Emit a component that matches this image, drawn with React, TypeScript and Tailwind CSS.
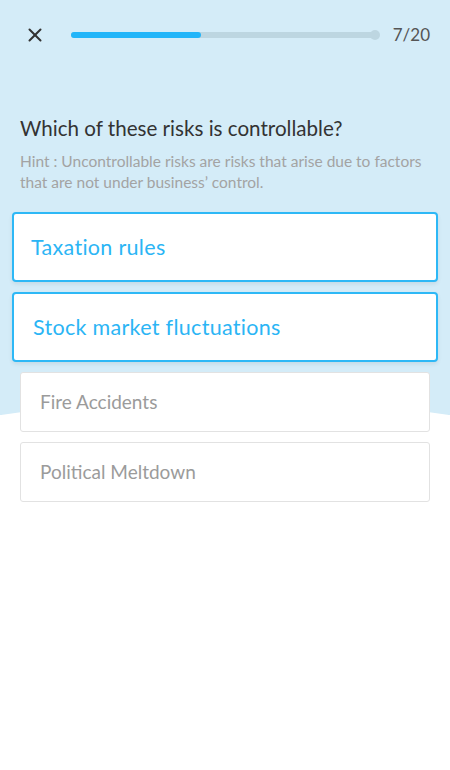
import { X } from "lucide-react";

const selected = ["Taxation rules", "Stock market fluctuations"];
const others = ["Fire Accidents", "Political Meltdown"];

export default function App() {
  return (
    <div
      className="relative w-[450px] h-[770px] overflow-hidden bg-white"
      style={{ fontFamily: "Lato, 'Noto Sans', sans-serif" }}
    >
      {/* light blue header area with curved bottom */}
      <div className="absolute inset-x-0 top-0 h-[460px] bg-[#d4ecf8]" />
      <div className="absolute left-[-175px] top-[400px] w-[800px] h-[174px] rounded-[50%] bg-white" />
      <div className="absolute inset-x-0 top-[487px] bottom-0 bg-white" />

      <div className="relative">
        {/* Top bar */}
        <div className="flex items-center h-[34px] mt-[18px] pl-[24px] pr-[20px]">
          <X className="w-[22px] h-[22px] text-[#333]" strokeWidth={2.2} />
          <div className="relative ml-[25px] w-[308px] h-[6px] rounded-full bg-[#bdd6e1]">
            <div className="h-full w-[130px] rounded-full bg-[#22b5f9]" />
            <div className="absolute right-[-1px] top-1/2 -translate-y-1/2 w-[10px] h-[10px] rounded-full bg-[#bdd6e1]" />
          </div>
          <span className="ml-auto text-[17px] text-[#555]">7/20</span>
        </div>

        {/* Question */}
        <div className="px-[20px] mt-[63px]">
          <h1 className="text-[20.6px] leading-[26px] text-[#333]">Which of these risks is controllable?</h1>
          <p className="mt-[10px] max-w-[405px] text-[15.5px] leading-[21px] text-[#a3a3a3]">
            Hint : Uncontrollable risks are risks that arise due to factors that are not under business’ control.
          </p>
        </div>

        {/* Options */}
        <div className="flex flex-col mt-[19px] px-[12px] gap-[10px]">
          {selected.map((s, i) => (
            <div
              key={s}
              className={`flex items-center h-[70px] bg-white border-2 border-[#2db8f6] rounded-[4px] shadow-[0_2px_4px_rgba(0,0,0,0.08)] text-[21.5px] tracking-[0.3px] text-[#2bb5f5] ${i === 0 ? "pl-[17px]" : "pl-[19px]"}`}
            >
              {s}
            </div>
          ))}
          {others.map((s) => (
            <div
              key={s}
              className="flex items-center mx-[8px] h-[60px] bg-white border border-[#e2e2e2] rounded-[3px] pl-[19px] text-[19px] text-[#9b9b9b]"
            >
              {s}
            </div>
          ))}
        </div>
      </div>
    </div>
  );
}
